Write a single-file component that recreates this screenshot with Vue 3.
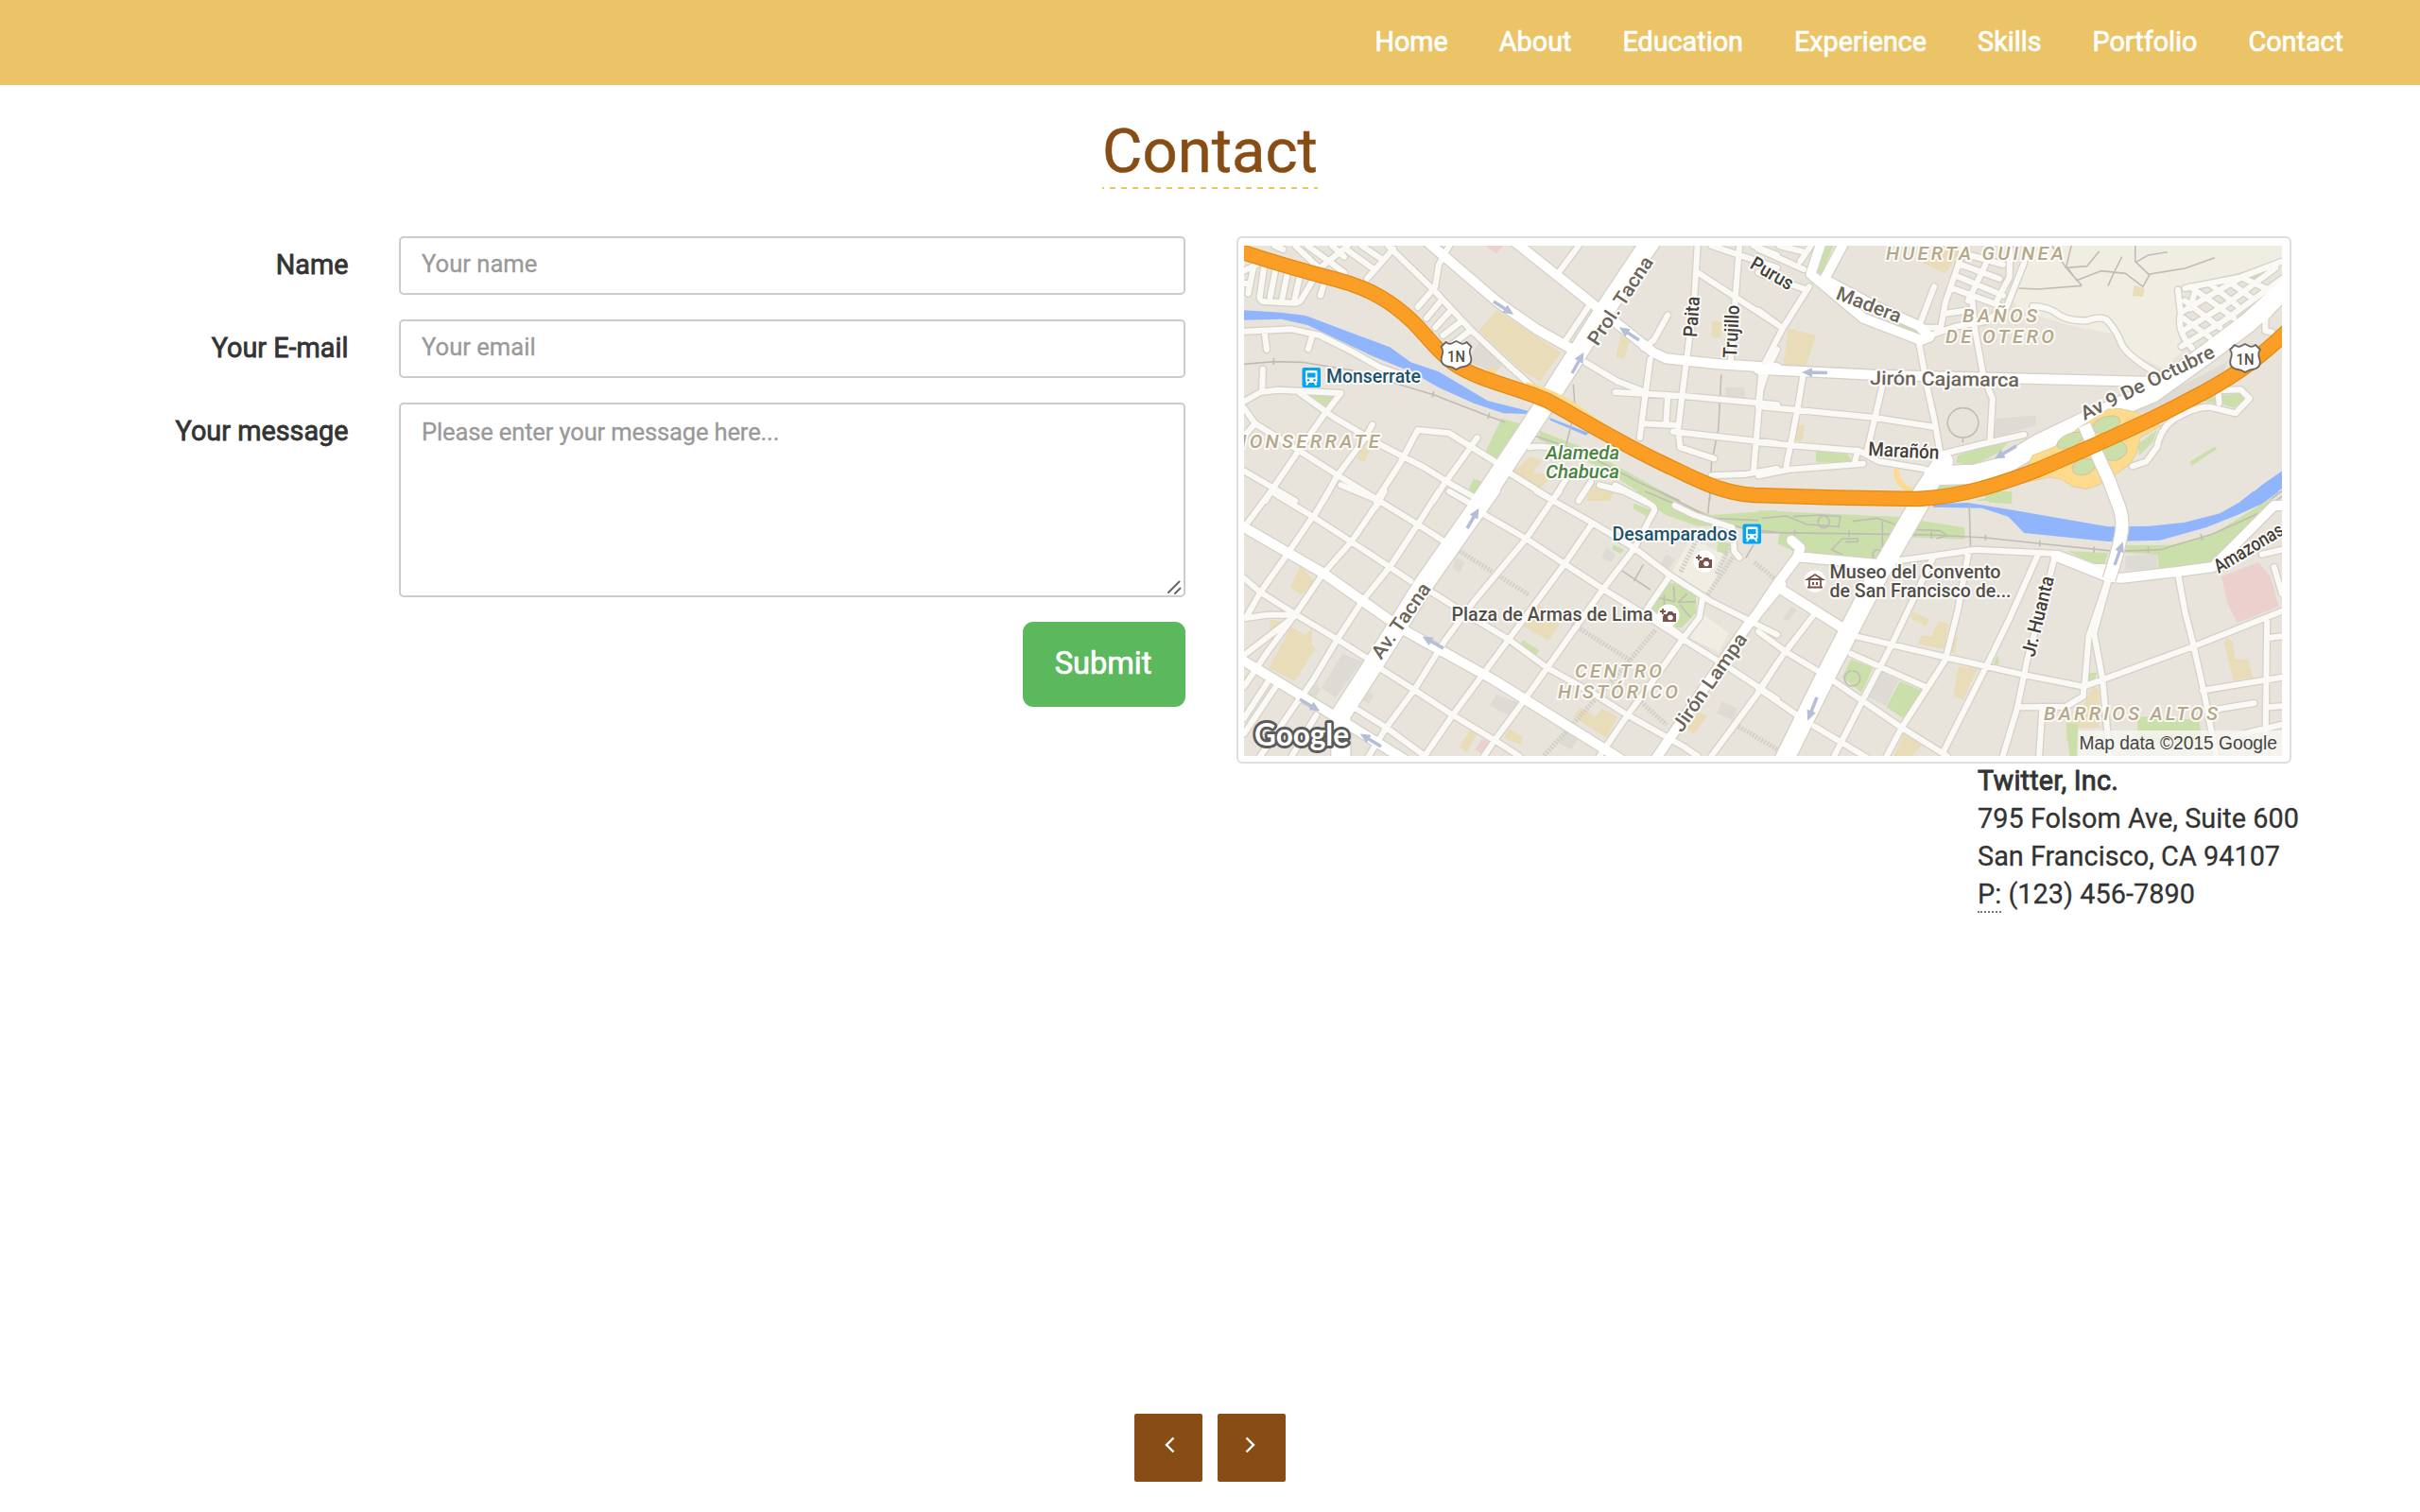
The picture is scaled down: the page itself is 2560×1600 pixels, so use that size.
<script setup>
const links = ['Home', 'About', 'Education', 'Experience', 'Skills', 'Portfolio', 'Contact']

// The map is drawn in four tiles; road widths stay in screen pixels.
const tiles = [
  {
    m: 'matrix(.36991 0 0 .33333 -16 -20)',
    light: '',
    grey: 'M715 370L790 430L760 465L680 425Z M1420 510H1475V545H1420Z',
    sand: 'M765 265L950 400L890 490L840 460L715 330Z M1120 345L1148 355L1130 420L1108 412Z M1382 300H1408V352H1380Z M380 695L402 710L388 748L368 738Z M860 730L895 740L870 780L925 790L890 830L810 780Z M1040 812L1105 830L1090 870H1020Z M43 130H55V150H43Z',
    pink: 'M735 60H785L765 85Z',
    park: 'M780 608L832 625L765 735L732 718Z M234 535L302 540L282 574Z M700 800L722 808L695 865L678 850Z M890 648L1010 700L1110 760L1290 870H1150L1210 870L1100 790L985 720L885 675Z',
    water: 'M43 265L150 272L220 282L340 332L460 382L520 430L600 460L740 552L860 586L850 594L785 592L700 560L600 510L520 460L410 410L225 312L150 293L43 296Z M915 605L1030 655L1020 662L920 615Z',
    rail: 'M43 436L130 428L210 430L350 455L500 505L590 535L740 600L790 620 M128 417V438 M586 522L582 542 M746 590L740 610 M865 660L1000 710L1180 815L1290 870 M985 500L990 580L965 690 M1408 470L1400 640L1380 750L1375 870',
    small: 'M190 60L275 150 M225 60L330 145 M340 60L245 145 M295 60L330 95 M470 70L395 165 M340 75L415 135 M380 60L440 105 M455 60L585 200L690 325L800 440L880 520 M630 60L600 120L590 190L540 255 M610 230L565 290 M637 262L590 320 M665 300L612 345 M690 330L640 372 M130 60L155 72 M1000 60L940 150 M1340 60L1330 240L1300 500L1285 640L1290 700L1388 736 M1460 60L1448 230L1435 425 M1340 145L1568 310 M1380 60L1568 130 M1500 60L1568 90 M1255 280L1215 360L1185 385 M1030 250L955 375 M1020 430L1110 490L1180 520 M1105 525L1300 537L1568 565 M1205 420L1190 540L1175 670 M1180 625L1280 630 M1255 535L1250 625 M1270 650L1568 688 M1568 390L1540 450L1520 520L1500 780 M1380 790L1480 785L1568 768 M43 332L180 325L260 345L350 395L430 445L520 480 M102 335L108 390 M237 350L227 388 M43 555L90 525L140 518L320 528L270 600 M200 525L300 605L430 690L560 765L640 820L720 870 M43 575L75 625L200 710L320 795L430 870 M97 452L95 515 M75 625L43 665 M270 600L200 710L120 840L105 870 M410 628L390 670L310 790L270 870 M540 645L490 750L420 870 M540 645L630 655L760 745 M710 670L685 710L610 825L585 870 M43 775L190 870 M800 780L930 870 M1105 820L1190 870 M965 800L925 870 M1035 810L1000 870 M100 130L88 225Q90 238 110 238L190 242Q205 240 210 225L240 170 M133 138L118 222 M167 148L152 230 M202 160L187 235 M272 180L262 218 M70 130L55 212 M43 140L80 120 M43 180H62 M860 700Q900 690 1000 720',
    mid: 'M570 50L770 240L880 325L1000 400 M820 50L1060 262L1215 400L1250 418L1400 436L1568 448',
    large: 'M1210 40L1060 290L900 570L710 890',
  },
  {
    m: 'matrix(.36991 0 0 .33333 544 -20)',
    light: 'M760 60H1498V110L1220 190L1200 300L1210 400L1160 450L1060 400L1010 340L880 310L740 260L720 200Z',
    grey: 'M680 610L795 598V630L675 668Z M1060 580L1200 510L1340 430L1330 460L1200 550L1100 590Z',
    sand: 'M85 322L165 345L135 448L72 440Z M470 115L530 60H590L535 148Z M1075 185L1105 195L1100 222L1070 220Z M115 628H132L126 680H106Z',
    pink: '',
    park: 'M195 60H215L180 150L165 140Z M320 285L440 315L460 345L440 352L320 300Z M165 712L255 722L270 748H165Z M285 730L305 748H285Z M570 725L640 700L715 685L690 715L620 755L565 750Z M520 818L620 808L560 850H510Z M1400 155L1480 125L1405 182Z M1235 745L1305 698L1312 705L1240 758Z M1325 535L1380 530L1390 545L1360 575L1320 560Z M1085 690L1140 645L1130 680L1090 725Z M620 870L725 840V870Z M1250 550L1300 530L1310 560Z M735 760L810 705L800 735L730 775Z',
    water: 'M1385 870L1440 820L1498 775V830L1450 870Z M330 290H360L365 300L335 302Z M375 310L405 315V325L380 322Z',
    rail: 'M745 195L800 198L925 187 M840 60L880 130L940 125L975 78 M895 60L880 130L925 187 M885 130L910 170L980 140L1050 148L1100 190L1120 150L1220 132L1305 98 M1078 60V110L1120 155 M1080 112L1115 90L1170 80 M1040 95L1015 150L1000 188 M585 575A44 47 0 1 0 586 575 M585 670V685 M1460 870L1498 838',
    small: 'M0 70L130 135 M60 60L130 80 M150 60L120 110 M0 145L130 197 M145 190L70 322L15 440 M0 265L70 322 M460 370L485 520L505 620L525 750 M503 190L465 300 M585 60L575 110L535 240L522 320H470 M480 350L560 318L650 300L710 255L760 115L770 60 M575 118L690 165 M565 155L700 218 M555 195L690 250 M650 120L600 235 M720 70L718 160L680 240 M605 90L700 120 M612 235L620 330L645 480L670 545L663 680 M535 275L605 265 M785 252Q835 255 860 280Q890 300 940 298Q985 280 1000 300Q1025 330 1040 375Q1060 415 1155 475 M0 570L330 605L500 635 M0 685L290 712L345 745L480 770 M0 790L90 770L300 752 M10 450L0 570 M130 460L112 580L80 760 M360 480L335 600L310 715 M285 710L275 750 M530 720L640 690L760 660 M1070 760L1110 745L1140 700Q1150 640 1190 610Q1250 570 1290 572L1365 592L1405 545L1380 517L1315 520L1318 560 M1220 195L1380 160L1498 110 M1200 200L1208 275Q1195 330 1240 385 M1210 380L1330 300L1498 165 M1215 330L1340 245L1480 130 M1212 270L1390 155 M1235 190L1280 225L1360 290 M1290 180L1370 250 M1220 235L1320 320 M1340 170L1410 225 M1380 160L1450 195 M1250 200L1235 260 M1215 290L1290 350 M1490 240L1450 290V330L1470 335',
    mid: 'M0 452L330 470L1130 492 M180 50L150 150 M245 50L190 165 M150 150L300 290L465 360L490 350L460 315L330 250L195 170',
    large: 'M1530 175L1400 305L1280 405L1130 525L950 610L800 690L690 765L620 785L500 790 M530 745L450 880',
  },
  {
    m: 'matrix(.36991 0 0 .33333 -16 260)',
    light: 'M1320 150L1420 200L1370 330L1260 270Z M1355 390L1430 450L1400 510L1320 465Z',
    grey: 'M325 515L380 540L305 655L265 625Z M390 630L415 645L400 675L378 660Z M765 645L825 670L800 710L745 680Z M960 760L1000 780L980 820L945 800Z M1080 180L1105 200L1095 225L1065 210Z M650 210L675 225L660 260L640 245Z M1250 200L1275 215L1260 245L1235 230Z M1410 665L1455 690L1440 725L1395 705Z M250 610L262 630L245 660L228 645Z',
    sand: 'M205 238L245 285L230 305L205 328L175 302Z M178 430L215 455L240 435L235 480L248 500L188 602L114 560Z M118 408L160 412L150 440L115 435Z M880 350L945 420L915 475L845 430Z M1005 685L1050 715L1065 690L1112 715L1080 782L985 715Z M1340 700L1368 712L1330 770L1308 755Z M690 757L710 770L680 828L658 812Z M800 752L840 780L835 806L787 782Z M1030 0H1090L1070 32Z',
    pink: 'M725 783L745 795L722 832L704 820Z',
    park: 'M840 472L888 505L880 518L832 490Z M690 0H704L695 22L678 15Z M1100 170L1130 185L1120 198L1095 182Z M1160 38L1210 60L1200 82L1155 55Z M1150 0H1200L1380 75L1568 60V130L1420 110L1340 110L1250 75Z M1400 150L1430 165L1425 200L1395 190Z M1245 293L1280 290L1335 325L1337 385L1295 433L1245 432L1212 370L1215 330Z',
    water: '',
    rail: 'M1190 0L1320 60L1470 118L1568 130 M1230 0L1380 85L1568 95 M1376 0L1370 70 M1115 245L1205 312 M1185 232L1158 285 M1500 170L1478 212 M1272 300L1275 350L1220 335 M1310 325L1285 352L1335 350 M1290 360L1320 400 M1245 330V400',
    small: 'M120 0L240 80L350 160L460 240L520 285 M320 -20L430 30L540 105L620 162 M630 0L690 38 M725 70L850 150L960 230L1070 310L1180 385L1300 470L1430 560L1568 660 M880 0L1040 100L1160 180L1260 265L1380 350L1568 455 M1060 -20L1130 0L1200 38Q1222 50 1215 65L1205 85 M1275 45L1330 75L1440 115L1445 190L1460 210 M580 320L680 390L800 470L910 560L1040 640L1140 710L1300 810L1340 840 M43 275L90 320L190 390L310 470L410 540 M430 560L530 630L640 710L760 790L830 840 M350 680L450 750L560 840 M43 403L110 392H190 M50 398L90 320 M120 0L43 115 M240 80L160 210L90 320 M430 30L350 160L270 260L190 390L110 510L43 620 M420 50L445 0 M540 105L600 0 M245 75L285 0 M540 105L460 240L380 350L310 470L240 600L200 665 M140 610L43 770 M120 590L43 720 M200 660L90 840 M250 710L180 840 M190 395L43 520 M930 20L850 150L700 350L620 470L530 630L450 750L400 840 M930 20L945 0 M1040 100L960 230L800 470L720 590L640 710L560 840 M1205 85L1160 180L1070 310L910 560L840 670L760 790L730 840 M1260 270L1195 375L1300 465L1220 590L1140 710L1060 840 M1355 340L1345 400L1300 465 M1568 545L1520 630L1380 840',
    mid: 'M30 105L270 260L500 440L760 600L1120 850 M30 530L290 705L500 850 M1580 295L1480 430L1220 850',
    large: 'M750 -10L560 290L430 520L320 710V850',
  },
  {
    m: 'matrix(.36991 0 0 .33333 544 260)',
    light: '',
    grey: 'M355 575L400 600L365 680L310 650Z M95 365L110 375L85 412L70 405Z M1050 205L1140 198L1142 245L1050 250Z',
    sand: 'M440 380L488 405L480 428L436 402Z M515 412L545 420L530 500L457 485L465 458L495 460Z M560 458L572 465L560 515L548 510Z M572 555L628 562L585 662L558 650Z M415 770L468 805L440 840H388Z M955 620L975 630V750H900L880 800V740L930 680Z M1340 465L1356 475L1362 530L1400 535L1415 590L1360 600L1345 540L1332 480Z M430 780L445 790Z',
    pink: 'M1325 270L1430 225L1465 270L1488 365L1370 418L1340 350Z',
    park: 'M0 60L180 70L390 80L590 115V152L420 145L350 217L150 195L100 190L55 165L62 130L0 115Z M640 0H725V40L660 35Z M265 533L328 560L295 638L240 590Z M405 603L468 632L415 720L366 685Z M683 520L690 545L672 555Z M885 190L1000 195L990 235L960 232Z M1050 172L1180 170L1300 135L1470 20L1440 70L1300 230L1145 247L1142 200L1050 195Z M945 575H970L960 600H942Z M1085 715L1260 725L1270 800H1085Z M880 735L915 740L910 840H890Z',
    water: 'M500 40L600 36L720 58L1000 112L1120 110L1220 98L1320 70L1375 35L1415 0H1490L1440 40L1370 75L1280 115L1150 155L1000 159L760 132L715 80L640 53L500 50Z',
    rail: 'M0 130L500 138L650 147L800 165L1020 190L1150 185L1300 135L1440 65L1498 15 M104 122V142 M259 124V145 M495 128V150 M650 137V155 M805 155V175 M960 175V195 M1115 175V195 M1265 135L1270 155 M603 35L607 175 M10 85L80 78L140 105L230 112L235 80L180 75L100 80 M355 95V215 M250 160H285V150H240L210 185L240 200 M270 95L340 85L430 120L520 125L540 140L510 150 M186 78A16 19 0 1 0 188 78 M340 185A14 16 0 1 0 342 185 M268 570A22 24 0 1 0 270 570',
    small: 'M400 220L500 205L620 185L860 198L960 240H1000 M0 445L80 510L200 590L410 750L540 840 M265 515L480 622 M280 460L530 525L750 580L930 620 M160 390L70 520L0 635 M0 625L130 725 M160 745L310 845 M500 210L440 350L380 490L300 660L215 845 M600 200L570 380L535 535L410 750L365 845 M800 200L720 400L650 560L530 825 M845 220L820 330L770 530L740 690L698 845 M740 685L880 683L930 650V620L1250 490L1498 380 M1200 260L1220 380L1245 490L1275 640L1310 845 M1270 632L1498 590 M1455 400L1450 840 M1460 465L1498 460 M1460 685L1498 682 M1310 692L1418 672 M1475 240L1498 325 M1440 200L1498 185 M812 690L803 845 M1350 780L1498 740 M1000 280L945 460L933 620 M1000 290L960 450L985 600L1005 845',
    mid: 'M95 155L120 180L112 208L50 300L-10 400 M112 208L380 235 M50 300L250 440 M850 205L1000 272L1040 275L1200 255L1300 240L1475 45H1500',
    large: 'M460 40L330 290L200 570L75 850',
  },
]

const roadClasses = [
  { key: 'small', width: 6 },
  { key: 'mid', width: 10 },
  { key: 'large', width: 20 },
]

const highway =
  'M-4 6C20 14 60 26 100 36.500C135 46 157 60 178 80C196 98 206 114 224 126C250 143 290 150 321 164C350 180 400 210 440 229C480 248 505 262 540 264L625 266.500L711 268C760 266 800 252 840 237C880 220 950 190 1000 163C1040 143 1070 123 1104 90'

// Bridge that passes under the highway at the interchange.
const bridge = 'M889 190L902 220L915 248L924 272Q932 290 927 310Q923 330 915 353'

const arrows = [
  [264, 59, 281, 70], [418, 100, 401, 89], [347, 135, 357, 117],
  [617, 134.500, 595, 134], [817, 212, 798, 223], [236, 299, 246, 282],
  [211, 426, 193, 416], [59, 480, 76, 490], [145, 530, 127, 519],
  [921, 338, 928, 318], [606, 478, 598, 498],
]

const labels = [
  { t: 'Monserrate', x: 87, y: 145, w: 100, c: 'station' },
  { t: 'Desamparados', x: 389.500, y: 311.500, w: 132, c: 'station' },
  { t: 'MONSERRATE', x: -15, y: 214, w: 158, c: 'area' },
  { t: 'HUERTA GUINEA', x: 679, y: 14.700, w: 188, c: 'area' },
  { t: 'BAÑOS', x: 760, y: 81, w: 79, c: 'area' },
  { t: 'DE OTERO', x: 742, y: 102.700, w: 115, c: 'area' },
  { t: 'CENTRO', x: 350, y: 457, w: 92, c: 'area' },
  { t: 'HISTÓRICO', x: 332, y: 479, w: 127, c: 'area' },
  { t: 'BARRIOS ALTOS', x: 846, y: 502, w: 184, c: 'area' },
  { t: 'Alameda', x: 319, y: 226, w: 78, c: 'green' },
  { t: 'Chabuca', x: 319, y: 245.700, w: 78, c: 'green' },
  { t: 'Prol. Tacna', x: 374, y: 107, w: 108, c: 'street', r: -56.5 },
  { t: 'Paita', x: 479, y: 97, w: 43, c: 'lane', r: -86 },
  { t: 'Trujillo', x: 521, y: 119, w: 56, c: 'lane', r: -87 },
  { t: 'Purus', x: 534, y: 23, w: 49, c: 'lane', r: 30 },
  { t: 'Madera', x: 625, y: 56, w: 72, c: 'street', r: 21 },
  { t: 'Jirón Cajamarca', x: 662, y: 147, w: 158, c: 'street', r: 0.8 },
  { t: 'Av 9 De Octubre', x: 889, y: 185, w: 155, c: 'street', r: -26 },
  { t: 'Marañón', x: 660, y: 222, w: 75, c: 'lane', r: 3 },
  { t: 'Plaza de Armas de Lima', x: 219.500, y: 397, w: 213, c: 'place' },
  { t: 'Museo del Convento', x: 619.500, y: 352, w: 181, c: 'place' },
  { t: 'de San Francisco de...', x: 619.500, y: 372, w: 192, c: 'place' },
  { t: 'Av. Tacna', x: 145, y: 439, w: 93, c: 'street', r: -55 },
  { t: 'Jirón Lampa', x: 463, y: 516, w: 122, c: 'street', r: -55 },
  { t: 'Jr. Huanta', x: 836, y: 436, w: 87, c: 'lane', r: -76 },
  { t: 'Amazonas', x: 1031, y: 347, w: 82, c: 'lane', r: -31 },
]
</script>

<template>
  <div class="page">
    <nav class="navbar">
      <a v-for="l in links" :key="l" class="nav-link">{{ l }}</a>
    </nav>

    <header class="heading"><h1>Contact</h1></header>

    <main class="content">
      <form class="form" @submit.prevent>
        <div class="row">
          <label for="name">Name</label>
          <input id="name" type="text" placeholder="Your name" />
        </div>
        <div class="row">
          <label for="email">Your E-mail</label>
          <input id="email" type="text" placeholder="Your email" />
        </div>
        <div class="row">
          <label for="message">Your message</label>
          <div class="area-wrap">
            <textarea id="message" placeholder="Please enter your message here..."></textarea>
            <svg class="grip" width="16" height="16" viewBox="0 0 16 16">
              <path d="M2 14L13.500 2.500M9 15L14.500 9.500" fill="none" stroke="#666" stroke-width="2" stroke-linecap="round" />
            </svg>
          </div>
        </div>
        <button class="submit">Submit</button>
      </form>

      <section class="side">
        <div class="thumbnail">
          <svg class="map" width="1098" height="540" viewBox="0 0 1098 540">
            <defs>
              <marker id="head" markerWidth="11" markerHeight="10" refX="6" refY="5" orient="auto" markerUnits="userSpaceOnUse">
                <path d="M0 0L11 5L0 10Z" fill="#b6bdd6" />
              </marker>
              <g id="train">
                <rect width="19.500" height="21" rx="2" fill="#03a5f5" />
                <path d="M5 3H14.500Q16 3 16 5V14.500Q16 16 14.500 16H5Q3.500 16 3.500 14.500V5Q3.500 3 5 3Z" fill="#fff" />
                <path d="M5.500 5.500H14V10.500H5.500Z" fill="#03a5f5" />
                <circle cx="6.500" cy="13.300" r="1.200" fill="#03a5f5" /><circle cx="13" cy="13.300" r="1.200" fill="#03a5f5" />
                <path d="M6.500 15L4.500 18.500M13 15L15 18.500" stroke="#fff" stroke-width="2" />
              </g>
              <g id="camera">
                <circle r="11.500" fill="#fff" />
                <path d="M-5 -1H-2L0 -4H4L5.500 -2H8V7H-6V2Z" fill="#7a5249" />
                <circle cx="2" cy="2.500" r="2.800" fill="#fff" />
                <path d="M-6 -7V-1M-9 -4H-3" stroke="#7a5249" stroke-width="1.800" />
              </g>
              <g id="shield">
                <path d="M-11 -14Q-7 -11 -4 -13L0 -15L4 -13Q7 -11 11 -14L16 -9Q13 -5 15 0Q18 9 10 11.500Q4 12 0 15Q-4 12 -10 11.500Q-18 9 -15 0Q-13 -5 -16 -9Z" fill="#fff" stroke="#6d655d" stroke-width="1.800" stroke-linejoin="round" />
                <text class="shield-text" x="0" y="6.500" text-anchor="middle" textLength="19" lengthAdjust="spacingAndGlyphs">1N</text>
              </g>
            </defs>

            <rect width="1098" height="540" fill="#e8e4dc" />
            <g v-for="t in tiles" :key="t.m" :transform="t.m">
              <path :d="t.light" fill="#f0ede3" />
              <path :d="t.grey" fill="#dedad4" />
              <path :d="t.sand" fill="#e9dcb8" />
              <path :d="t.pink" fill="#ecd0cd" />
              <path :d="t.park" fill="#cadfaa" />
              <path :d="t.water" fill="#90b5fd" />
              <path :d="t.rail" class="rail" />
            </g>
            <g class="walk">
              <path d="M228 323L302 370M347 400L410 440M435 407L390 460L317 540M420 483L447 507M520 507L564 533M517 330L490 370M462 345L483 303M500 347L515 315M540 335L568 358M450 440L415 482" />
            </g>

            <g v-for="t in tiles" :key="'c' + t.m" :transform="t.m" class="casing">
              <path v-for="r in roadClasses" :key="r.key" :d="t[r.key]" :stroke-width="r.width + 2.600" />
            </g>
            <g v-for="t in tiles" :key="'f' + t.m" :transform="t.m" class="road">
              <path v-for="r in roadClasses" :key="r.key" :d="t[r.key]" :stroke-width="r.width" :class="r.key" />
            </g>

            <!-- Interchange ramps and lawns -->
            <path d="M834 222L857 213L884 192L896 185L914 173L927 172.500L947 177L957 190L972 190L948 203L944 220L936 232L921 243L904 253L891 257.500L877 255L864 247L852 245L820 252Z" fill="#fdda8c" stroke="#e0cfa2" stroke-width="1" />
            <g class="ramp"><path d="M690 236Q690 254 706 259M298 147Q330 156 350 170L395 202M256 136L266 131" /></g>
            <g fill="#cadfaa" stroke="#cfc6a0" stroke-width="1">
              <ellipse cx="912" cy="189" rx="15" ry="8" transform="rotate(-20 912 189)" />
              <ellipse cx="874" cy="206" rx="15" ry="7" transform="rotate(-25 874 206)" />
              <ellipse cx="921" cy="217" rx="13" ry="10" transform="rotate(-15 921 217)" />
              <ellipse cx="888" cy="234" rx="12" ry="8.500" transform="rotate(-15 888 234)" />
            </g>
            <path :d="bridge" fill="none" stroke="#d6d1c7" stroke-width="15.500" />
            <path :d="bridge" fill="none" stroke="#fff" stroke-width="13" />

            <path :d="highway" fill="none" stroke="#e48a12" stroke-width="16.500" />
            <path :d="highway" fill="none" stroke="#fa9e25" stroke-width="14" />

            <line
              v-for="(a, i) in arrows" :key="i"
              :x1="a[0]" :y1="a[1]" :x2="a[2]" :y2="a[3]"
              stroke="#b6bdd6" stroke-width="3.500" marker-end="url(#head)"
            />

            <use href="#train" x="61.500" y="129" />
            <use href="#train" x="527.500" y="294.500" />
            <use href="#camera" x="487" y="334" />
            <use href="#camera" x="449" y="391" />
            <g transform="translate(604 355)">
              <circle r="11.500" fill="#fff" />
              <path d="M-8 -2L0 -7L8 -2ZM-6 -1V6M6 -1V6M-8 6.500H8" fill="none" stroke="#7a5249" stroke-width="1.800" />
              <path d="M-2 1V4M2 1V4" stroke="#7a5249" stroke-width="2" />
            </g>
            <use href="#shield" x="224.500" y="116" />
            <use href="#shield" x="1059" y="119" />

            <text
              v-for="l in labels" :key="l.t"
              :class="['lbl', l.c]" :textLength="l.w"
              :lengthAdjust="l.c === 'area' ? 'spacing' : 'spacingAndGlyphs'"
              :transform="`translate(${l.x} ${l.y}) rotate(${l.r || 0})`"
            >{{ l.t }}</text>

            <text class="logo" x="11" y="529" textLength="100" lengthAdjust="spacingAndGlyphs">Google</text>
            <rect x="882.500" y="513" width="216" height="27" fill="#f7f6f2" fill-opacity=".8" />
            <text class="credit" x="883.500" y="532.500" textLength="209.500" lengthAdjust="spacingAndGlyphs">Map data ©2015 Google</text>
          </svg>
        </div>
        <address>
          <strong>Twitter, Inc.</strong><br />
          795 Folsom Ave, Suite 600<br />
          San Francisco, CA 94107<br />
          <abbr>P:</abbr> (123) 456-7890
        </address>
      </section>
    </main>

    <footer class="pager">
      <button class="page-btn" aria-label="Previous">
        <svg width="12" height="18" viewBox="0 0 12 18"><path d="M10.500 1.500L3 9L10.500 16.500" /></svg>
      </button>
      <button class="page-btn next" aria-label="Next">
        <svg width="12" height="18" viewBox="0 0 12 18"><path d="M1.500 1.500L9 9L1.500 16.500" /></svg>
      </button>
    </footer>
  </div>
</template>

<style>
body { margin: 0; background: #fff; }
</style>

<style scoped>
.page {
  box-sizing: border-box;
  display: flex;
  flex-direction: column;
  height: 1600px;
  padding-bottom: 32px;
  font-family: Roboto, "Liberation Sans", sans-serif;
  font-size: 28.8px;
  line-height: 40px;
  color: #333;
}
.navbar {
  box-sizing: border-box;
  display: flex;
  justify-content: flex-end;
  align-items: center;
  height: 90px;
  padding: 0 54px 2px 0;
  background: #ecc468;
}
.nav-link {
  padding: 0 27px;
  color: #fff;
  font-size: 28.75px;
  -webkit-text-stroke: 0.7px #fff;
}
.heading {
  display: flex;
  justify-content: center;
  height: 160px;
}
h1 {
  box-sizing: border-box;
  width: 228px;
  height: 110px;
  margin: 0;
  padding-top: 34px;
  background: repeating-linear-gradient(90deg, transparent 0 8px, #ecc468 8px 12px, #ecc468 12px 14px, transparent 14px 20px) no-repeat;
  background: linear-gradient(90deg, #ecc468 50%, transparent 50%) -4px 100% / 12px 2px repeat-x;
  font-size: 65.2px;
  font-weight: 400;
  line-height: 72px;
  text-align: center;
  color: #874d14;
  -webkit-text-stroke: 0.5px #874d14;
}
.content {
  display: flex;
  gap: 54px;
  padding-left: 108px;
}
.form {
  display: flex;
  flex-direction: column;
  gap: 26px;
  width: 1146px;
}
.row {
  display: flex;
  gap: 54px;
}
label {
  width: 260.5px;
  margin-right: -0.5px;
  padding-top: 10px;
  text-align: right;
  -webkit-text-stroke: 0.8px #333;
}
input, textarea {
  box-sizing: border-box;
  width: 832px;
  margin: 0;
  border: 2px solid #ccc;
  border-radius: 5px;
  background: #fff;
  font-family: inherit;
  font-size: 25.6px;
  line-height: 36px;
  outline: none;
}
input { height: 62px; padding: 8px 22px 12px; }
textarea {
  display: block;
  height: 206px;
  padding: 11px 22px;
  letter-spacing: -0.17px;
  resize: none;
}
input::placeholder, textarea::placeholder {
  color: #999;
  opacity: 1;
  -webkit-text-stroke: 0.3px #999;
}
.area-wrap { position: relative; }
.grip { position: absolute; right: 4px; bottom: 3px; }
.submit {
  align-self: flex-end;
  width: 172px;
  height: 90px;
  padding: 0 2px 2px 0;
  border: 0;
  border-radius: 11px;
  background: #5cb85c;
  color: #fff;
  font-family: inherit;
  font-size: 32.6px;
  -webkit-text-stroke: 0.7px #fff;
}
.side { width: 1124px; }
.thumbnail {
  box-sizing: border-box;
  width: 1116px;
  height: 558px;
  padding: 8px 8px 6px 6px;
  border: 2px solid #ddd;
  border-radius: 6px;
}
.map { display: block; overflow: hidden; }
address {
  width: 340px;
  margin: -2px 0 0 auto;
  font-style: normal;
  letter-spacing: 0.05px;
  white-space: nowrap;
  -webkit-text-stroke: 0.3px #333;
}
strong { font-weight: 400; letter-spacing: 0.2px; -webkit-text-stroke: 0.9px #333; }
abbr {
  display: inline-block;
  height: 38px;
  border-bottom: 2px dotted #777;
  line-height: 40px;
}
.pager {
  display: flex;
  justify-content: center;
  gap: 16px;
  margin-top: auto;
}
.page-btn {
  width: 72px;
  height: 72px;
  padding: 0 0 7px 2px;
  border: 0;
  border-radius: 2px;
  background: #874d14;
}
.page-btn.next { padding: 0 2px 7px 0; }
.page-btn svg { display: block; margin: 0 auto; }
.page-btn path { fill: none; stroke: #fff; stroke-width: 2.4; }

.rail, .casing path, .road path, .walk path, .ramp path { fill: none; stroke-linejoin: round; vector-effect: non-scaling-stroke; }
.rail { stroke: #c0bcb5; stroke-width: 1.6; }
.casing path { stroke: #d6d1c7; stroke-linecap: round; }
.road path { stroke: #fff; stroke-linecap: round; }
.road .small { stroke: #faf9f6; }
.walk path { stroke: #d3cfc8; stroke-width: 5; stroke-dasharray: 2 1.5; }
.ramp path { stroke: #fbdb8f; stroke-width: 6; }

.lbl {
  font-size: 20.5px;
  font-weight: 500;
  paint-order: stroke;
  stroke: rgba(255, 255, 255, 0.85);
  stroke-width: 4px;
  stroke-linejoin: round;
}
.station { fill: #1d536d; }
.place { fill: #524e48; }
.street { fill: #6b6459; }
.lane { fill: #443f38; }
.green { fill: #4a8341; font-style: italic; }
.area { fill: #b5a888; font-style: italic; }
.shield-text { font-size: 17px; font-weight: 500; fill: #544d46; }
.logo {
  font-family: Lato, sans-serif;
  font-size: 33px;
  font-weight: 700;
  fill: #fff;
  stroke: #5b5b5b;
  stroke-width: 6px;
  stroke-linejoin: round;
  paint-order: stroke;
}
.credit { font-family: "Liberation Sans", sans-serif; font-size: 20px; fill: #444; }
</style>
